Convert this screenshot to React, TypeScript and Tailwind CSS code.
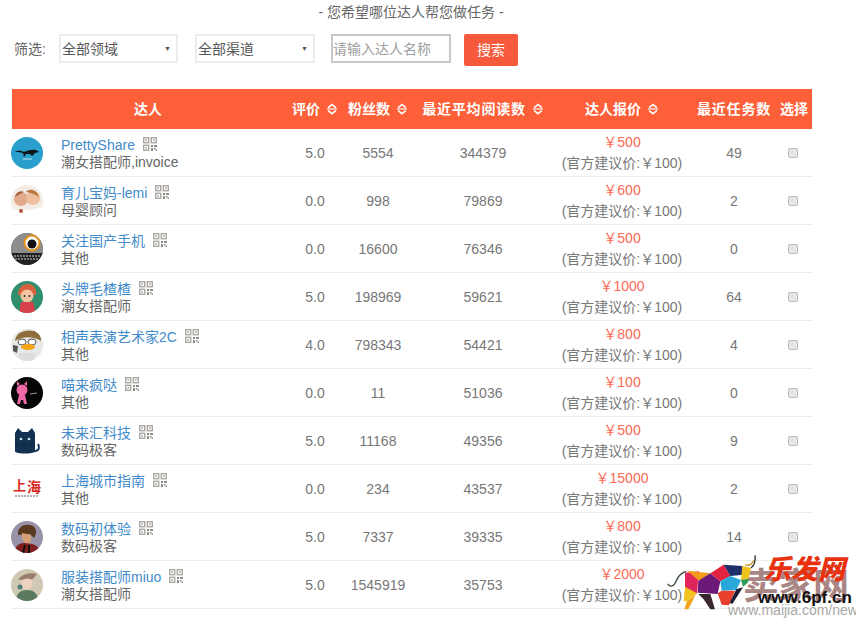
import type { ReactNode } from "react";

const font = { fontFamily: '"Liberation Sans", "Noto Sans CJK SC", sans-serif' };

function QrIcon() {
  return (
    <svg viewBox="0 0 14 14" className="h-[14px] w-[14px] shrink-0">
      <g fill="none" stroke="#a9a5a0" strokeWidth="1.4">
        <rect x="0.7" y="0.7" width="5" height="5" />
        <rect x="0.7" y="8.300" width="5" height="5" />
        <rect x="8.300" y="0.7" width="5" height="5" />
      </g>
      <rect x="2.400" y="2.400" width="1.600" height="1.600" fill="#a9a5a0" />
      <rect x="2.400" y="10" width="1.600" height="1.600" fill="#a9a5a0" />
      <rect x="10" y="2.400" width="1.600" height="1.600" fill="#a9a5a0" />
      <path d="M8 8h2v2H8zM11 8h3v2h-3zM8 11h2v3H8zM11 11h1.500v1.500H11zM12.500 12.500h1.500V14h-1.500z" fill="#8f8b86" />
    </svg>
  );
}

function SortIcon() {
  return (
    <svg viewBox="0 0 14 14" className="ml-[6px] h-3 w-3 shrink-0">
      <path d="M2.500 5.500 7 1.800l4.500 3.700" fill="none" stroke="#fff" strokeWidth="1.800" />
      <path d="M1 7h12" stroke="#fff" strokeWidth="1.300" />
      <path d="M2.500 9 7 12.500 11.500 9" fill="none" stroke="#fff" strokeWidth="1.800" />
    </svg>
  );
}

function Avatar({ children, bg }: { children: ReactNode; bg: string }) {
  return (
    <svg viewBox="0 0 32 32" className="h-8 w-8 shrink-0 rounded-full" style={{ background: bg }}>
      {children}
    </svg>
  );
}

const avatars: ReactNode[] = [
  <Avatar bg="#2b9fcb">
    <path d="M4 15c4-2 6-1 9 0 3-1 7-3 12-2l3 2-4 1-3 3-2-2-4 0-2 3-1-4c-3-1-5-1-8-1z" fill="#0d1418" />
    <path d="M12 22h9" stroke="#bfe3f1" strokeWidth="1" />
  </Avatar>,
  <Avatar bg="#f3ece6">
    <circle cx="10" cy="14" r="7" fill="#e0a98b" />
    <circle cx="22" cy="13" r="7" fill="#eebf9c" />
    <path d="M15 7c3-4 11-3 13 5-4-3-8-4-13-5z" fill="#b9773f" />
    <path d="M4 12c1-5 6-7 9-5-3 1-6 3-9 5z" fill="#a8603a" />
    <path d="M3 24c6 2 20 2 27-2v10H3z" fill="#fff" />
    <circle cx="10" cy="26" r="2" fill="#b6553f" />
  </Avatar>,
  <Avatar bg="#777">
    <path d="M0 0h32v22H0z" fill="#8d8d8d" />
    <path d="M0 20h32v12H0z" fill="#222" />
    <path d="M3 23h26M4 26h24" stroke="#9a9a9a" strokeWidth="1.500" strokeDasharray="2 1" />
    <circle cx="21" cy="10" r="7.500" fill="#fff" stroke="#e5901c" strokeWidth="2" />
    <circle cx="21" cy="11" r="4.500" fill="#111" />
  </Avatar>,
  <Avatar bg="#2f8f6c">
    <path d="M7 14c0-8 5-11 10-11s9 4 8 11z" fill="#d8603e" />
    <circle cx="16" cy="15" r="6.500" fill="#f2c49f" />
    <path d="M8 32l2-11h12l3 11z" fill="#d9424a" />
    <circle cx="13.500" cy="15" r="0.900" fill="#222" />
    <circle cx="18.500" cy="15" r="0.900" fill="#222" />
  </Avatar>,
  <Avatar bg="#e8e8e6">
    <path d="M4 12C5 3 14 0 24 2c5 2 6 6 6 10-8-5-18-5-26 0z" fill="#8f6c3a" />
    <ellipse cx="11" cy="13" rx="4" ry="3" fill="#fff" stroke="#555" />
    <ellipse cx="21" cy="13" rx="4" ry="3" fill="#fff" stroke="#555" />
    <ellipse cx="17" cy="18" rx="7" ry="3" fill="#f5a511" />
    <path d="M2 16l5 1-1 7-4-2z" fill="#555" />
    <path d="M8 24h16v8H8z" fill="#ddd" />
  </Avatar>,
  <Avatar bg="#050505">
    <circle cx="11" cy="13" r="5.500" fill="#f06aa7" />
    <path d="M6 9V4l3 3zM16 9V4l-3 3z" fill="#f06aa7" />
    <path d="M8 18h6l2 9h-3l-1-4-2 0-1 4H6z" fill="#f06aa7" />
    <path d="M19 17l7-1" stroke="#bbb" strokeWidth="0.800" />
  </Avatar>,
  <Avatar bg="#fff">
    <path d="M4 27V8l3-5 4 4h6l4-4 3 5v19c-6 2-14 2-20 0z" fill="#12304f" />
    <circle cx="10" cy="14" r="1.300" fill="#d8e7f2" />
    <circle cx="18" cy="14" r="1.300" fill="#d8e7f2" />
    <path d="M24 26c4 0 5-4 3-7" fill="none" stroke="#173a5c" strokeWidth="2" />
  </Avatar>,
  <Avatar bg="#fff">
    <text x="2" y="17" fontSize="13" fontWeight="700" fill="#d9261c" fontFamily="Noto Sans CJK SC">上</text>
    <text x="16" y="19" fontSize="14" fontWeight="700" fill="#d9261c" fontFamily="Noto Sans CJK SC">海</text>
    <path d="M4 23h23" stroke="#999" strokeWidth="1.500" strokeDasharray="2 1" />
  </Avatar>,
  <Avatar bg="#9a92a8">
    <path d="M7 14c-1-8 6-11 12-10 6 1 8 7 4 13l-4-4z" fill="#5c3a20" />
    <path d="M11 12l9 2 0 7-5 2-4-5z" fill="#d6a074" />
    <path d="M3 32c0-7 6-10 10-10l8 1c5 1 8 5 8 9z" fill="#7f1f1f" />
    <path d="M12 32l2-8M18 32l0-8" stroke="#111" strokeWidth="2" />
  </Avatar>,
  <Avatar bg="#cfc9b4">
    <path d="M7 11c3-6 12-8 19-6l-4 5z" fill="#9a7d6c" />
    <circle cx="16" cy="15" r="5.500" fill="#efd2bd" />
    <path d="M5 32c0-8 5-11 11-11s11 3 11 11z" fill="#5a7a5f" />
    <circle cx="9" cy="18" r="2.500" fill="#4f7f7a" />
  </Avatar>,
];

const rows = [
  { name: "PrettyShare", tag: "潮女搭配师,invoice", score: "5.0", fans: "5554", reads: "344379", price: "500", tasks: "49" },
  { name: "育儿宝妈-lemi", tag: "母婴顾问", score: "0.0", fans: "998", reads: "79869", price: "600", tasks: "2" },
  { name: "关注国产手机", tag: "其他", score: "0.0", fans: "16600", reads: "76346", price: "500", tasks: "0" },
  { name: "头牌毛楂楂", tag: "潮女搭配师", score: "5.0", fans: "198969", reads: "59621", price: "1000", tasks: "64" },
  { name: "相声表演艺术家2C", tag: "其他", score: "4.0", fans: "798343", reads: "54421", price: "800", tasks: "4" },
  { name: "喵来疯哒", tag: "其他", score: "0.0", fans: "11", reads: "51036", price: "100", tasks: "0" },
  { name: "未来汇科技", tag: "数码极客", score: "5.0", fans: "11168", reads: "49356", price: "500", tasks: "9" },
  { name: "上海城市指南", tag: "其他", score: "0.0", fans: "234", reads: "43537", price: "15000", tasks: "2" },
  { name: "数码初体验", tag: "数码极客", score: "5.0", fans: "7337", reads: "39335", price: "800", tasks: "14" },
  { name: "服装搭配师miuo", tag: "潮女搭配师", score: "5.0", fans: "1545919", reads: "35753", price: "2000", tasks: "" },
];

function Bull() {
  return (
    <svg viewBox="0 0 300 186" className="absolute left-[25px] top-[20px] h-[62px] w-[100px]">
      <path d="M8 102c8 10 16 8 22-2 6-14 14-32 34-36" fill="none" stroke="#3c4a3a" strokeWidth="4" />
      <path d="M60 68l42-4-6 66-36 22z" fill="#e0245e" />
      <path d="M66 62l70 8-34 22z" fill="#f59b1a" />
      <path d="M60 110l36 20-30 24-10 0z" fill="#f4c21f" />
      <path d="M100 92l36-22 30 24-8 38-60-4z" fill="#6b1a78" />
      <path d="M136 70l40-26 20 34-30 16z" fill="#e2223f" />
      <path d="M176 44l56 4 4 26-40 4z" fill="#1e2f6b" />
      <path d="M166 94l30-16 32 12-14 30-44 2z" fill="#28a8d8" />
      <path d="M158 130l12-8 40 0-18 44-22-2z" fill="#e8402c" />
      <path d="M232 48l26 6-8 34-22 2z" fill="#f0c31e" />
      <path d="M228 90l24-4-4 12-14 12z" fill="#2f9e57" />
      <path d="M214 118l20-6-32 50-8-4z" fill="#1c1f33" />
      <path d="M100 132l36 0 14 46h-14l-20-30z" fill="#3a2730" />
      <path d="M66 154l26-20-22 44H58z" fill="#f2a31c" />
      <path d="M258 54c10-8 14-22 12-38" fill="none" stroke="#2b2b2b" strokeWidth="4" />
      <path d="M240 44c10 4 20 0 26-12" fill="none" stroke="#cf9a2c" strokeWidth="4" />
    </svg>
  );
}

function Watermark() {
  return (
    <div className="pointer-events-none absolute bottom-0 right-0 h-[89px] w-[216px] overflow-hidden">
      <div className="absolute left-[103px] top-[39px] text-[36px] font-bold leading-[36px] tracking-[-1px] text-[#a98585]">卖家网</div>
      <div className="absolute left-[88px] top-[71px] whitespace-nowrap leading-[18px] text-[#a8a8a8]">www.maijia.com/news</div>
      <Bull />
      <div className="absolute left-[124px] top-[24px] whitespace-nowrap text-[27px] font-black italic leading-[32px] text-[#e8310f]">乐发网</div>
      <div className="absolute left-[118px] top-[59px] whitespace-nowrap text-[17px] font-bold leading-[18px] text-[#111]">www.6pf.cn</div>
    </div>
  );
}

export default function App() {
  return (
    <div className="relative h-[619px] w-[856px] overflow-hidden bg-white text-sm text-[#666]" style={font}>
      <p className="ml-[11px] w-[800px] pt-[2px] text-center leading-[20px]">- 您希望哪位达人帮您做任务 -</p>

      {/* Filters */}
      <div className="flex items-start pl-[14px] pt-[12px]">
        <span className="mr-[13px] leading-[30px]">筛选:</span>
        <div className="mr-[17px] flex h-[29px] w-[119px] items-center justify-between border-2 border-[#ececec] pl-[1px] pr-[5px] text-[#555]">
          全部领域<span className="text-[7px]">▼</span>
        </div>
        <div className="mr-[16px] flex h-[29px] w-[120px] items-center justify-between border-2 border-[#ececec] pl-[1px] pr-[5px] text-[#555]">
          全部渠道<span className="text-[7px]">▼</span>
        </div>
        <div className="mr-[13px] flex h-[29px] w-[120px] items-center border-2 border-[#c8c8c8] text-[#a0a0a0]">请输入达人名称</div>
        <button className="h-[32px] w-[54px] rounded-[2px] bg-[#f7593c] text-white">搜索</button>
      </div>

      {/* Table */}
      <div className="ml-[12px] mt-[23px] w-[800px]">
        <div className="grid h-10 grid-cols-[272px_62px_64px_146px_132px_92px_32px] items-center whitespace-nowrap bg-[#fd6039] text-center font-bold text-white">
          <div>达人</div>
          <div className="flex items-center justify-center">评价<SortIcon /></div>
          <div className="flex items-center justify-center">粉丝数<SortIcon /></div>
          <div className="flex items-center justify-center tracking-[0.8px]">最近平均阅读数<SortIcon /></div>
          <div className="flex items-center justify-center">达人报价<SortIcon /></div>
          <div className="tracking-[0.8px]">最近任务数</div>
          <div className="-ml-1">选择</div>
        </div>

        {rows.map((r, i) => (
          <div key={r.name} className="grid h-12 grid-cols-[272px_62px_64px_146px_132px_92px_32px] items-center border-b border-[#ececec] text-center text-[#777]">
            <div className="flex items-center">
              <div className="-ml-[1px]">{avatars[i]}</div>
              <div className="ml-[18px] pt-[2px] text-left leading-[17px]">
                <div className="flex items-center">
                  <span className="text-[#428bca]">{r.name}</span>
                  <span className="-mt-[2px] ml-[8px]"><QrIcon /></span>
                </div>
                <div className="text-[#666]">{r.tag}</div>
              </div>
            </div>
            <div>{r.score}</div>
            <div>{r.fans}</div>
            <div>{r.reads}</div>
            <div className="leading-[21px]">
              <div className="text-[#fd6a55]">￥{r.price}</div>
              <div>(官方建议价:￥100)</div>
            </div>
            <div>{r.tasks}</div>
            <div className="flex justify-center pr-[7px]">
              <input type="checkbox" className="h-[10px] w-[10px] appearance-none rounded-[2px] border border-[#bdbdbd] bg-[#e6e6e6]" readOnly />
            </div>
          </div>
        ))}
      </div>

      <Watermark />
    </div>
  );
}
